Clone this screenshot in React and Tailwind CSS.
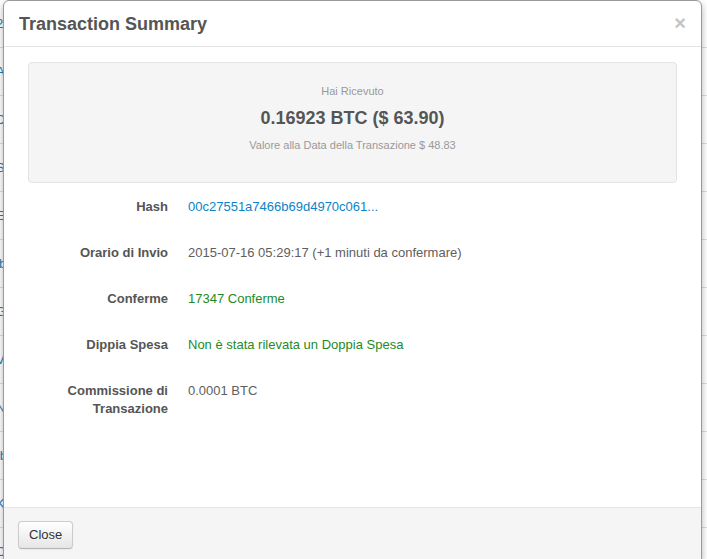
import React from 'react';

const bgRows = ['2', 'A', 'D', 'S', 'E', 'i', 'G', 'V', 'N', 'I', 'K', 'C'];

const details = [
    { label: 'Hash', value: '00c27551a7466b69d4970c061...', tone: 'link' },
    { label: 'Orario di Invio', value: '2015-07-16 05:29:17 (+1 minuti da confermare)' },
    { label: 'Conferme', value: '17347 Conferme', tone: 'ok' },
    { label: 'Dippia Spesa', value: 'Non è stata rilevata un Doppia Spesa', tone: 'ok' },
    { label: 'Commissione di Transazione', value: '0.0001 BTC' },
];

const toneClass = {
    link: 'text-[#0a84c9]',
    ok: 'text-[#1f8a1f]',
};

const App = () => {
    return (
        <div className="relative h-[559px] w-full overflow-hidden bg-white font-['Liberation_Sans',Arial,sans-serif]">
            {/* page behind the modal */}
            <div className="flex flex-col">
                {bgRows.map((c, i) => (
                    <div
                        key={i}
                        className="flex h-[48px] items-center border-b border-[#dddddd] text-[13px] text-[#2a7ab8]"
                    >
                        <span className="-ml-[4px]">{c}bc</span>
                    </div>
                ))}
            </div>

            {/* Modal */}
            <div className="absolute left-[3px] top-0 w-[699px] rounded-[6px] border border-[#9a9a9a] bg-white shadow-[0_3px_7px_rgba(0,0,0,0.3)]">
                <div className="flex h-[46px] items-center justify-between border-b border-[#e5e5e5] pl-[15px] pr-[15px]">
                    <h3 className="text-[18px] font-bold leading-[20px] text-[#555555]">Transaction Summary</h3>
                    <button className="-mt-[2px] text-[20px] font-bold leading-none text-[#c4c4c4]">×</button>
                </div>

                <div className="px-[24px] pt-[15px] pb-[89px]">
                    {/* Received box */}
                    <div className="rounded-[4px] border border-[#e3e3e3] bg-[#f5f5f5] pt-[20px] pb-[29px] text-center">
                        <p className="text-[11px] leading-[16px] text-[#999999]">Hai Ricevuto</p>
                        <p className="mt-[7px] text-[18px] font-bold leading-[24px] text-[#555555]">
                            0.16923 BTC ($ 63.90)
                        </p>
                        <p className="mt-[7px] text-[11px] leading-[16px] text-[#999999]">
                            Valore alla Data della Transazione $ 48.83
                        </p>
                    </div>

                    {/* Details */}
                    <div className="mt-[15px] grid grid-cols-[140px_1fr] gap-x-[20px] gap-y-[28px] text-[13px] leading-[18px]">
                        {details.map((d) => (
                            <React.Fragment key={d.label}>
                                <div className="text-right font-bold text-[#555555]">{d.label}</div>
                                <div className={toneClass[d.tone] || 'text-[#5e5e5e]'}>{d.value}</div>
                            </React.Fragment>
                        ))}
                    </div>
                </div>

                <div className="rounded-b-[6px] border-t border-[#e5e5e5] bg-[#f5f5f5] px-[14px] pt-[13px] pb-[14px]">
                    <button className="h-[28px] rounded-[4px] border border-[#cccccc] border-b-[#b3b3b3] bg-gradient-to-b from-white to-[#e6e6e6] px-[10px] text-[13px] text-[#333333] shadow-[inset_0_1px_0_rgba(255,255,255,0.2),0_1px_2px_rgba(0,0,0,0.05)]">
                        Close
                    </button>
                </div>
            </div>
        </div>
    );
};

export default App;
